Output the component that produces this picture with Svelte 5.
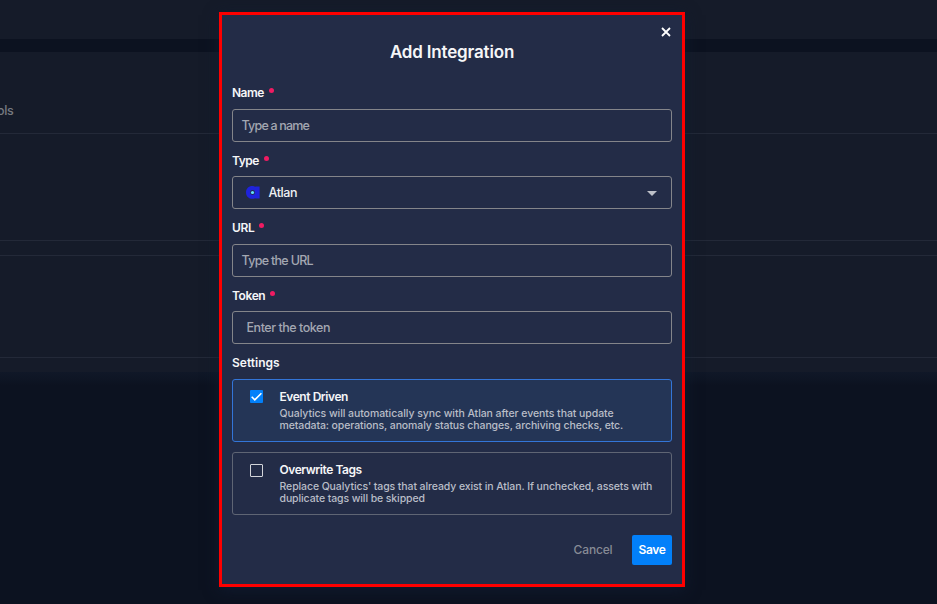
<script>
  const fields = [
    { label: 'Name', text: 'Type a name', kind: 'name' },
    { label: 'Type', text: 'Atlan', kind: 'type' },
    { label: 'URL', text: 'Type the URL', kind: 'url' },
    { label: 'Token', text: 'Enter the token', kind: 'token' }
  ];
  const settings = [
    {
      title: 'Event Driven',
      checked: true,
      lines: [
        'Qualytics will automatically sync with Atlan after events that update',
        'metadata: operations, anomaly status changes, archiving checks, etc.'
      ]
    },
    {
      title: 'Overwrite Tags',
      checked: false,
      lines: [
        "Replace Qualytics' tags that already exist in Atlan. If unchecked, assets with",
        'duplicate tags will be skipped'
      ]
    }
  ];
</script>

<div class="page">
  <div class="topbar"></div>
  <div class="panel">
    <div class="tabs"><span>ols</span></div>
    <div class="row first"></div>
    <div class="gap"></div>
    <div class="row second"></div>
  </div>
  <div class="fade"></div>

  <div class="modal" role="dialog" aria-label="Add Integration">
    <div class="top">
      <button class="close" aria-label="Close">
        <svg width="10" height="10" viewBox="0 0 10 10"><path d="M1 1L9 9M9 1L1 9" stroke="#fff" stroke-width="1.8" /></svg>
      </button>
    </div>
    <h1>Add Integration</h1>

    {#each fields as f}
      <div class="field">
        <div class="label l-{f.kind}"><span>{f.label}</span><i></i></div>
        <div class="box {f.kind}">
          {#if f.kind === 'type'}
            <svg class="logo" width="14" height="13" viewBox="0 0 14 13">
              <path d="M6.2 0C7.6 0 8.5.3 9.3 1V.6H13.6V12.5H9.3V11.9C8.5 12.5 7.6 12.8 6.4 12.8C2.7 12.8 0 10.1 0 6.4S2.7 0 6.2 0Z" fill="#1f23dc" />
              <circle cx="6.5" cy="6.5" r="2.4" fill="#232c47" />
              <circle cx="6.5" cy="6.5" r="1.6" fill="#62e1fc" />
            </svg>
          {/if}
          <span>{f.text}</span>
          {#if f.kind === 'type'}
            <svg class="caret" width="10" height="5" viewBox="0 0 10 5"><path d="M0 0H10L5 5Z" fill="#bdc0c8" /></svg>
          {/if}
        </div>
      </div>
    {/each}

    <div class="label"><span>Settings</span></div>
    {#each settings as s}
      <div class="card" class:on={s.checked}>
        <div class="check">
          {#if s.checked}
            <svg width="13" height="13" viewBox="0 0 13 13"><path d="M1.7 6.8L4.8 9.9L11.4 3.3" fill="none" stroke="#fff" stroke-width="1.6" /></svg>
          {/if}
        </div>
        <div class="copy">
          <strong>{s.title}</strong>
          {#each s.lines as line}
            <p>{line}</p>
          {/each}
        </div>
      </div>
    {/each}

    <div class="actions">
      <button class="cancel">Cancel</button>
      <button class="save">Save</button>
    </div>
  </div>
</div>

<style>
  :global(body) { margin: 0; background: #0c1220; }
  .page {
    position: relative;
    width: 937px;
    height: 604px;
    overflow: hidden;
    background: #0c1220;
    font-family: Inter, "Noto Sans", sans-serif;
    box-sizing: border-box;
  }
  .page * { box-sizing: border-box; }
  .topbar { height: 39px; background: #151b29; margin-bottom: 13px; }
  .panel { height: 320px; background: #151b29; }
  .tabs {
    height: 82px;
    padding-top: 51px;
    border-bottom: 1px solid #232938;
    color: #777a80;
    font-size: 12.5px;
    font-weight: 500;
    line-height: 16px;
    letter-spacing: -0.4px;
  }
  .tabs span { margin-left: -3px; }
  .row { border-bottom: 1px solid #232938; }
  .first { height: 107px; }
  .gap { height: 14px; }
  .second { height: 103px; border-top: 1px solid #232938; }
  .fade { height: 14px; background: linear-gradient(#101828, #0c1220); }

  .modal {
    position: absolute;
    left: 219px;
    top: 12px;
    width: 466px;
    height: 575px;
    padding: 0 10px;
    border: 3px solid #fe0000;
    background: #232c47;
    color: #f5f6f8;
    box-shadow: 0 3px 14px rgba(18, 30, 52, 0.75);
  }
  button { border: 0; padding: 0; background: none; font-family: inherit; }
  .top { display: flex; justify-content: flex-end; height: 24px; padding-top: 12px; }
  .close { display: flex; width: 10px; height: 10px; margin-right: 1px; }
  h1 {
    margin: 0;
    height: 45.4px;
    font-size: 17px;
    line-height: 26px;
    font-weight: 600;
    text-align: center;
    letter-spacing: -0.17px;
  }
  .field { margin-bottom: 10px; }
  .label {
    display: flex;
    height: 17px;
    margin-bottom: 7.5px;
    font-size: 12px;
    line-height: 17px;
    font-weight: 600;
  }
  .label i { width: 5px; height: 5px; margin: 4px 0 0 5px; border-radius: 50%; background: #f01b62; }
  .l-name, .l-type { letter-spacing: -0.5px; }
  .l-url { letter-spacing: -0.35px; }
  .l-token { letter-spacing: -0.4px; }
  .box {
    display: flex;
    align-items: center;
    height: 33px;
    padding: 0 8.5px;
    border: 1px solid #84858a;
    border-radius: 3px;
    color: #a3a7b2;
    font-size: 12.5px;
    font-weight: 500;
    letter-spacing: -0.4px;
  }
  .name { letter-spacing: -0.8px; }
  .url { letter-spacing: -0.7px; }
  .token { padding-left: 13.5px; letter-spacing: -0.46px; }
  .type { padding: 0 14px 0 13px; color: #f0f1f4; }
  .logo { margin-right: 8.5px; }
  .caret { margin: 1px 0 0 auto; }

  .card {
    display: flex;
    height: 63px;
    margin-bottom: 10px;
    border: 1px solid #5f6574;
    border-radius: 3px;
  }
  .card.on { border-color: #3375d8; background: #243556; }
  .check {
    flex: none;
    width: 13px;
    height: 13px;
    margin: 11px 16.5px 0 17px;
    border: 1px solid #d3d5da;
    border-radius: 1px;
  }
  .on .check { display: flex; margin-top: 10px; border: 0; background: #0280fa; }
  strong { display: block; height: 16px; margin-top: 9.2px; font-size: 12px; line-height: 16px; font-weight: 600; letter-spacing: -0.44px; }
  p { margin: 0; height: 12px; font-size: 10.5px; line-height: 12px; font-weight: 500; color: #b9bdc7; white-space: nowrap; letter-spacing: -0.1px; }
  p:first-of-type { margin-top: 3px; }
  .on p:first-of-type { letter-spacing: -0.06px; }
  .actions { display: flex; justify-content: flex-end; align-items: center; margin-top: 20px; }
  .cancel { margin-right: 19.5px; color: #878b95; font-size: 12px; font-weight: 500; letter-spacing: -0.15px; }
  .save { width: 40px; height: 30px; padding-bottom: 1px; border-radius: 2px; background: #0280fa; color: #fff; font-size: 12px; font-weight: 600; letter-spacing: -0.3px; }
</style>
